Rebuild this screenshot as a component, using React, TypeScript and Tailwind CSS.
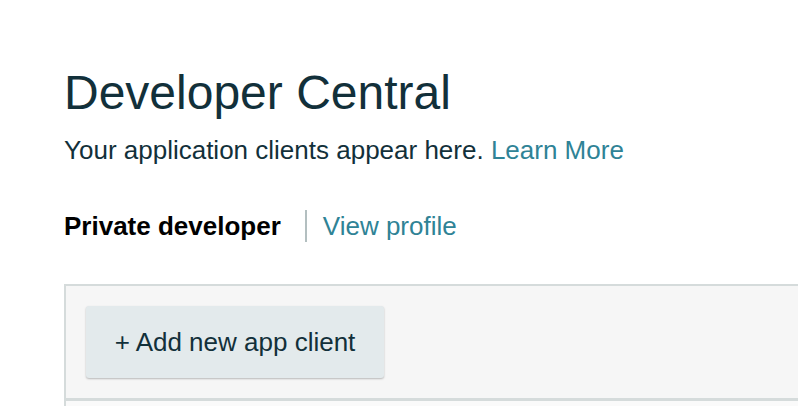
import { useState } from "react";

const App = () => {
  const [clients] = useState<string[]>([]);

  return (
    <div className="min-h-screen bg-white pt-[65px] pl-16 font-['Liberation_Sans',Arial,sans-serif] overflow-hidden">
      <h1 className="text-[48px] leading-[56px] text-[#12303a]">Developer Central</h1>

      <p className="mt-[13px] text-[26px] leading-[32px] text-[#12303a]">
        Your application clients appear here.{" "}
        <a href="#" className="text-[#2f8396]">
          Learn More
        </a>
      </p>

      <div className="mt-[44px] flex items-center text-[26px] leading-[32px]">
        <span className="font-bold text-black">Private developer</span>
        <span className="ml-[24px] mr-[16px] h-8 w-[2px] bg-[#b3bfc0]" />
        <a href="#" className="text-[#2f8396]">
          View profile
        </a>
      </div>

      <div className="mt-[42px] border-t-2 border-l-2 border-[#d5dbdb]">
        <div className="bg-[#f6f6f6] p-5 border-b-[3px] border-[#d5dbdb]">
          <button
            type="button"
            className="h-[72px] w-[298px] rounded-[3px] bg-[#e3eaec] text-[26px] text-[#12303a] shadow-[0_1px_2px_rgba(0,0,0,0.25)]"
          >
            + Add new app client
          </button>
        </div>
        <div className="h-6 bg-[#fafafa]">
          {clients.map((c) => (
            <div key={c}>{c}</div>
          ))}
        </div>
      </div>
    </div>
  );
};

export default App;
